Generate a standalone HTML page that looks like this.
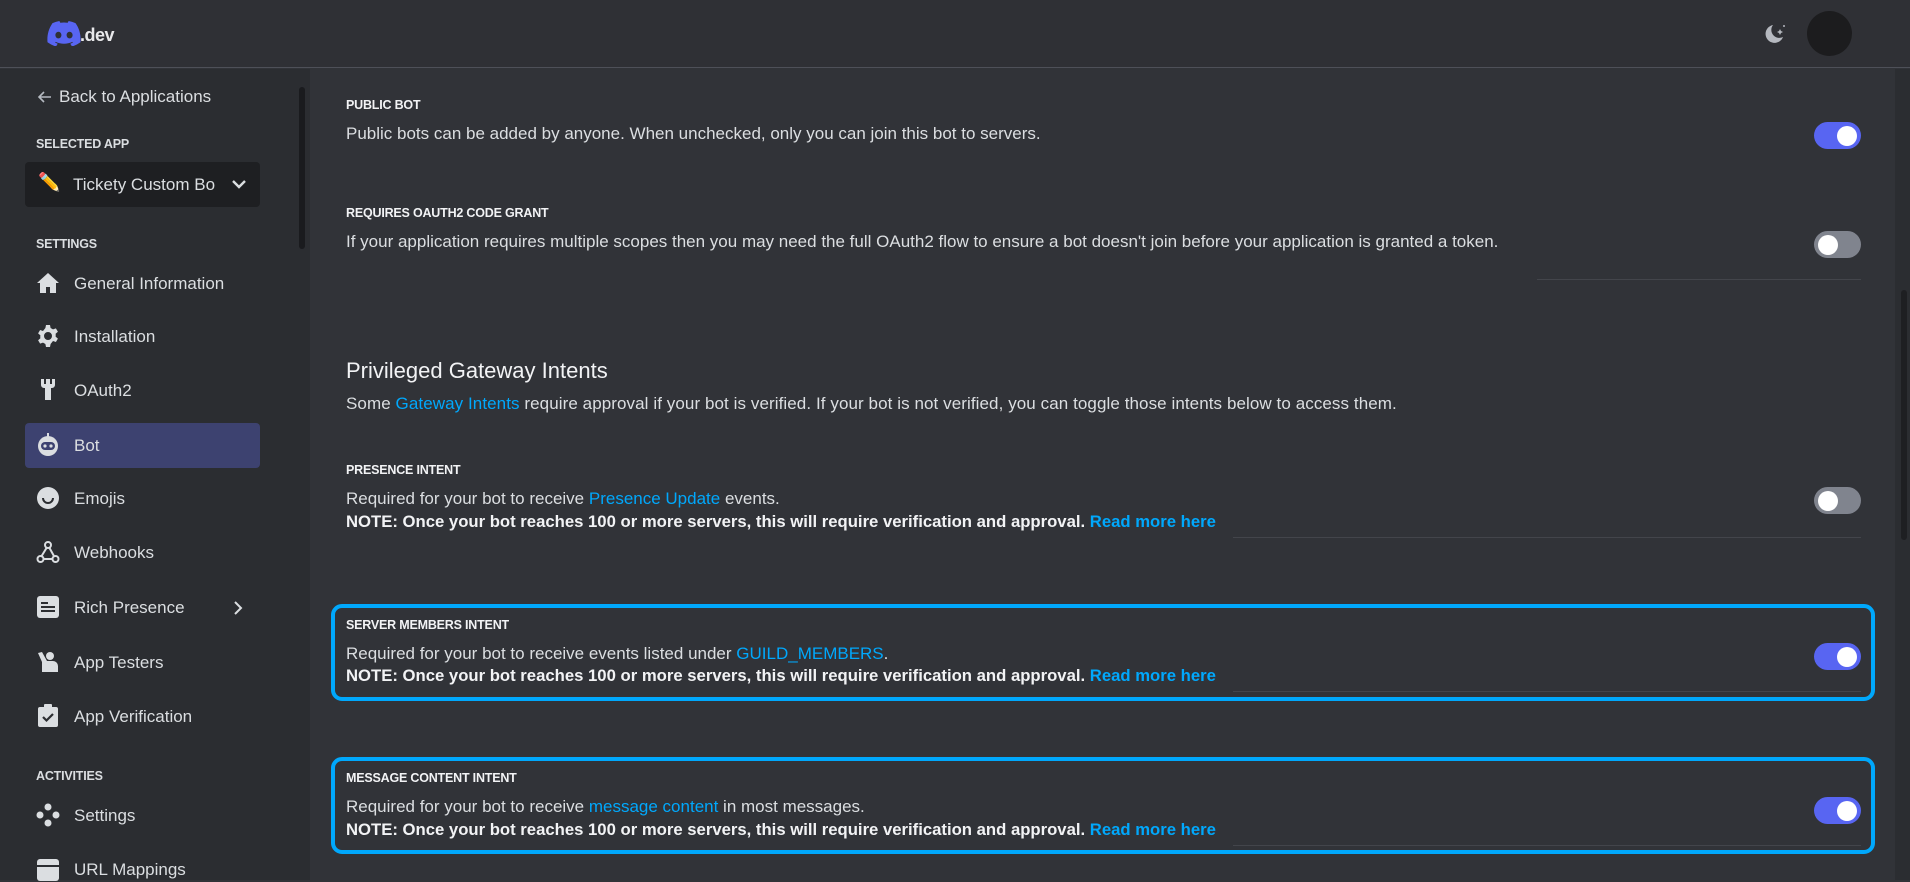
<!DOCTYPE html>
<html><head><meta charset="utf-8"><style>
*{box-sizing:border-box;margin:0;padding:0}
body{width:1910px;height:880px;overflow:hidden;background:#313338;font-family:"Liberation Sans",sans-serif;color:#dbdee1;position:relative}
.abs{position:absolute;white-space:nowrap}
#hdr{position:absolute;left:0;top:0;width:1910px;height:68px;background:#2f3035;border-bottom:1px solid #4e5058}
#side{position:absolute;left:0;top:69px;width:310px;height:811px;background:#2b2d31}
.lbl{font-size:12.5px;font-weight:bold;color:#f2f3f5;letter-spacing:-0.2px}
.sec{font-size:12.5px;font-weight:bold;color:#dbdee1;letter-spacing:-0.2px}
.desc{font-size:17px;color:#dbdee1}
.note{font-size:16.7px;font-weight:bold;color:#f2f3f5;letter-spacing:0}
a{color:#00a8fc;text-decoration:none}
.nav{font-size:17px;color:#dbdee1;left:74px}
.ic{position:absolute;left:36px;width:24px;height:24px}
.tg{position:absolute;left:1814px;width:47px;height:27px;border-radius:14px}
.tg.on{background:#5865f2}
.tg.off{background:#80848e}
.tg i{position:absolute;top:3.5px;width:20px;height:20px;border-radius:50%;background:#fff}
.tg.on i{right:4px}.tg.off i{left:4px}
.sep{position:absolute;height:1px;background:#43454b}
.box{position:absolute;left:331px;width:1544px;border:4px solid #00a8fc;border-radius:11px}
</style></head><body>
<div id="hdr">
 <svg class="abs" style="left:47px;top:21px" width="34" height="25" viewBox="0 0 34 25"><path d="M28.5 2.1A28 28 0 0 0 21.6 0l-.9 1.8a26 26 0 0 0-7.4 0L12.4 0a28 28 0 0 0-6.9 2.1C1.1 8.6 0 15 .5 21.3A28 28 0 0 0 9 25.5l1.7-2.8a18 18 0 0 1-2.7-1.3l.7-.5a20 20 0 0 0 16.6 0l.7.5a18 18 0 0 1-2.7 1.3l1.7 2.8a28 28 0 0 0 8.5-4.2C34 14 32.5 7.6 28.5 2.1ZM11.4 17.4c-1.6 0-3-1.5-3-3.3s1.3-3.3 3-3.3 3 1.5 3 3.3-1.3 3.3-3 3.3Zm11.2 0c-1.6 0-3-1.5-3-3.3s1.3-3.3 3-3.3 3 1.5 3 3.3-1.3 3.3-3 3.3Z" fill="#5865f2"/></svg>
 <div class="abs" style="left:80px;top:25px;font-size:18px;font-weight:bold;color:#e8e8ea;letter-spacing:-0.5px">.dev</div>
 <svg class="abs" style="left:1763px;top:22px" width="24" height="24" viewBox="0 0 24 24"><path d="M10 3a9 9 0 1 0 10 12A8 8 0 0 1 10 3Z" fill="#b5b8bf"/><path d="M17 7l1 2 2 1-2 1-1 2-1-2-2-1 2-1Z" fill="#b5b8bf"/><circle cx="21" cy="4" r="1" fill="#b5b8bf"/></svg>
 <div class="abs" style="left:1807px;top:11px;width:45px;height:45px;border-radius:50%;background:#1c1c1e"></div>
</div>
<div id="side"></div>
<div class="abs" style="left:297px;top:75px;width:10px;height:800px;background:#2b2d31"></div>
<div class="abs" style="left:299px;top:87px;width:6px;height:162px;border-radius:3px;background:#1a1b1e"></div>
<div class="abs" style="left:1895px;top:69px;width:15px;height:811px;background:#2b2d31"></div>
<div class="abs" style="left:1901px;top:290px;width:6px;height:250px;border-radius:3px;background:#1e1f22"></div>

<svg class="abs" style="left:37px;top:89px" width="16" height="16" viewBox="0 0 16 16"><path d="M14 8H2M7 3 2 8l5 5" stroke="#b5bac1" stroke-width="1.6" fill="none"/></svg>
<div class="abs" style="left:59px;top:87px;font-size:17px;color:#dbdee1">Back to Applications</div>
<div class="abs sec" style="left:36px;top:137px">SELECTED APP</div>
<div class="abs" style="left:25px;top:162px;width:235px;height:45px;background:#1e1f22;border-radius:4px"></div>
<div class="abs" style="left:38px;top:172px;font-size:18px">✏️</div>
<div class="abs" style="left:73px;top:175px;font-size:17px;color:#dbdee1">Tickety Custom Bo</div>
<svg class="abs" style="left:231px;top:177px" width="16" height="14" viewBox="0 0 16 14"><path d="M2 4l6 6 6-6" stroke="#dbdee1" stroke-width="2.4" fill="none"/></svg>
<div class="abs sec" style="left:36px;top:237px">SETTINGS</div>
<div class="abs" style="left:25px;top:423px;width:235px;height:45px;background:#3d4270;border-radius:4px"></div>

<svg class="ic" style="top:271px" viewBox="0 0 24 24"><path d="M12 2 1 12h3v10h6v-6h4v6h6V12h3Z" fill="#dbdee1"/></svg>
<div class="abs nav" style="top:274px">General Information</div>
<svg class="ic" style="top:324px" viewBox="0 0 24 24"><path d="M10 1h4l.6 3 2.4 1.4 2.9-1 2 3.4-2.3 2a7 7 0 0 1 0 2.8l2.3 2-2 3.4-2.9-1L14.6 20 14 23h-4l-.6-3L7 18.6l-2.9 1-2-3.4 2.3-2a7 7 0 0 1 0-2.8l-2.3-2 2-3.4 2.9 1L9.4 4Zm2 7a4 4 0 1 0 0 8 4 4 0 0 0 0-8Z" fill="#dbdee1"/></svg>
<div class="abs nav" style="top:327px">Installation</div>
<svg class="ic" style="top:378px" viewBox="0 0 24 24"><path d="M5 1v6a3 3 0 0 0 3 3h1v12h6V10h1a3 3 0 0 0 3-3V1h-3v5h-2V1H10v5H8V1Z" fill="#dbdee1"/></svg>
<div class="abs nav" style="top:381px">OAuth2</div>
<svg class="ic" style="top:433px" viewBox="0 0 24 24"><circle cx="12" cy="13" r="10" fill="#dbdee1"/><rect x="5" y="9" width="14" height="8" rx="4" fill="#3d4270"/><circle cx="9" cy="13" r="1.6" fill="#dbdee1"/><circle cx="15" cy="13" r="1.6" fill="#dbdee1"/><rect x="11" y="0" width="2" height="4" fill="#dbdee1"/></svg>
<div class="abs nav" style="top:436px">Bot</div>
<svg class="ic" style="top:486px" viewBox="0 0 24 24"><circle cx="12" cy="12" r="11" fill="#dbdee1"/><path d="M7 12a5 5 0 0 0 10 0" stroke="#2b2d31" stroke-width="2" fill="none"/></svg>
<div class="abs nav" style="top:489px">Emojis</div>
<svg class="ic" style="top:540px" viewBox="0 0 24 24"><g stroke="#dbdee1" stroke-width="2" fill="none"><circle cx="12" cy="5" r="3"/><circle cx="4.5" cy="19" r="3"/><circle cx="19.5" cy="19" r="3"/><path d="M10.5 8 5 17M13.5 8l5 9M7.5 19h9"/></g></svg>
<div class="abs nav" style="top:543px">Webhooks</div>
<svg class="ic" style="top:595px" viewBox="0 0 24 24"><rect x="1" y="1" width="22" height="22" rx="3" fill="#dbdee1"/><path d="M5 8h7M5 12h14M5 16h14" stroke="#2b2d31" stroke-width="2"/></svg>
<div class="abs nav" style="top:598px">Rich Presence</div>
<svg class="abs" style="left:232px;top:600px" width="12" height="16" viewBox="0 0 12 16"><path d="M3 2l6 6-6 6" stroke="#dbdee1" stroke-width="2" fill="none"/></svg>
<svg class="ic" style="top:650px" viewBox="0 0 24 24"><circle cx="14" cy="6" r="4" fill="#dbdee1"/><path d="M2 3l4 9v10h16v-6a5 5 0 0 0-5-5h-6L6 2Z" fill="#dbdee1"/></svg>
<div class="abs nav" style="top:653px">App Testers</div>
<svg class="ic" style="top:704px" viewBox="0 0 24 24"><rect x="2" y="3" width="20" height="20" rx="2" fill="#dbdee1"/><rect x="8" y="0" width="8" height="5" rx="1" fill="#dbdee1"/><path d="M7 13l3.5 3.5L17 10" stroke="#2b2d31" stroke-width="2.2" fill="none"/></svg>
<div class="abs nav" style="top:707px">App Verification</div>
<div class="abs sec" style="left:36px;top:769px">ACTIVITIES</div>
<svg class="ic" style="top:803px" viewBox="0 0 24 24"><g fill="#dbdee1"><circle cx="12" cy="4" r="3.5"/><circle cx="12" cy="20" r="3.5"/><circle cx="4" cy="12" r="3.5"/><circle cx="20" cy="12" r="3.5"/></g></svg>
<div class="abs nav" style="top:806px">Settings</div>
<svg class="ic" style="top:858px" viewBox="0 0 24 24"><rect x="1" y="1" width="22" height="22" rx="3" fill="#dbdee1"/><rect x="1" y="7" width="22" height="2" fill="#2b2d31"/></svg>
<div class="abs nav" style="top:860px">URL Mappings</div>

<!-- main -->
<div class="abs lbl" style="left:346px;top:98px">PUBLIC BOT</div>
<div class="abs desc" style="left:346px;top:124px">Public bots can be added by anyone. When unchecked, only you can join this bot to servers.</div>
<div class="tg on" style="top:122px"><i></i></div>

<div class="abs lbl" style="left:346px;top:206px">REQUIRES OAUTH2 CODE GRANT</div>
<div class="abs desc" style="left:346px;top:232px">If your application requires multiple scopes then you may need the full OAuth2 flow to ensure a bot doesn't join before your application is granted a token.</div>
<div class="tg off" style="top:231px"><i></i></div>
<div class="sep" style="left:1537px;top:279px;width:324px"></div>

<div class="abs" style="left:346px;top:358px;font-size:22px;color:#f2f3f5">Privileged Gateway Intents</div>
<div class="abs desc" style="left:346px;top:394px;letter-spacing:0.08px">Some <a>Gateway Intents</a> require approval if your bot is verified. If your bot is not verified, you can toggle those intents below to access them.</div>

<div class="abs lbl" style="left:346px;top:463px">PRESENCE INTENT</div>
<div class="abs desc" style="left:346px;top:489px">Required for your bot to receive <a>Presence Update</a> events.</div>
<div class="abs note" style="left:346px;top:512px">NOTE: Once your bot reaches 100 or more servers, this will require verification and approval. <a>Read more here</a></div>
<div class="tg off" style="top:487px"><i></i></div>
<div class="sep" style="left:1233px;top:537px;width:628px"></div>

<div class="box" style="top:604px;height:97px"></div>
<div class="abs lbl" style="left:346px;top:618px">SERVER MEMBERS INTENT</div>
<div class="abs desc" style="left:346px;top:644px">Required for your bot to receive events listed under <a>GUILD_MEMBERS</a>.</div>
<div class="abs note" style="left:346px;top:666px">NOTE: Once your bot reaches 100 or more servers, this will require verification and approval. <a>Read more here</a></div>
<div class="tg on" style="top:643px"><i></i></div>
<div class="sep" style="left:1233px;top:691px;width:628px"></div>

<div class="box" style="top:757px;height:97px"></div>
<div class="abs lbl" style="left:346px;top:771px">MESSAGE CONTENT INTENT</div>
<div class="abs desc" style="left:346px;top:797px">Required for your bot to receive <a>message content</a> in most messages.</div>
<div class="abs note" style="left:346px;top:820px">NOTE: Once your bot reaches 100 or more servers, this will require verification and approval. <a>Read more here</a></div>
<div class="tg on" style="top:797px"><i></i></div>
<div class="sep" style="left:1233px;top:845px;width:628px"></div>
</body></html>
